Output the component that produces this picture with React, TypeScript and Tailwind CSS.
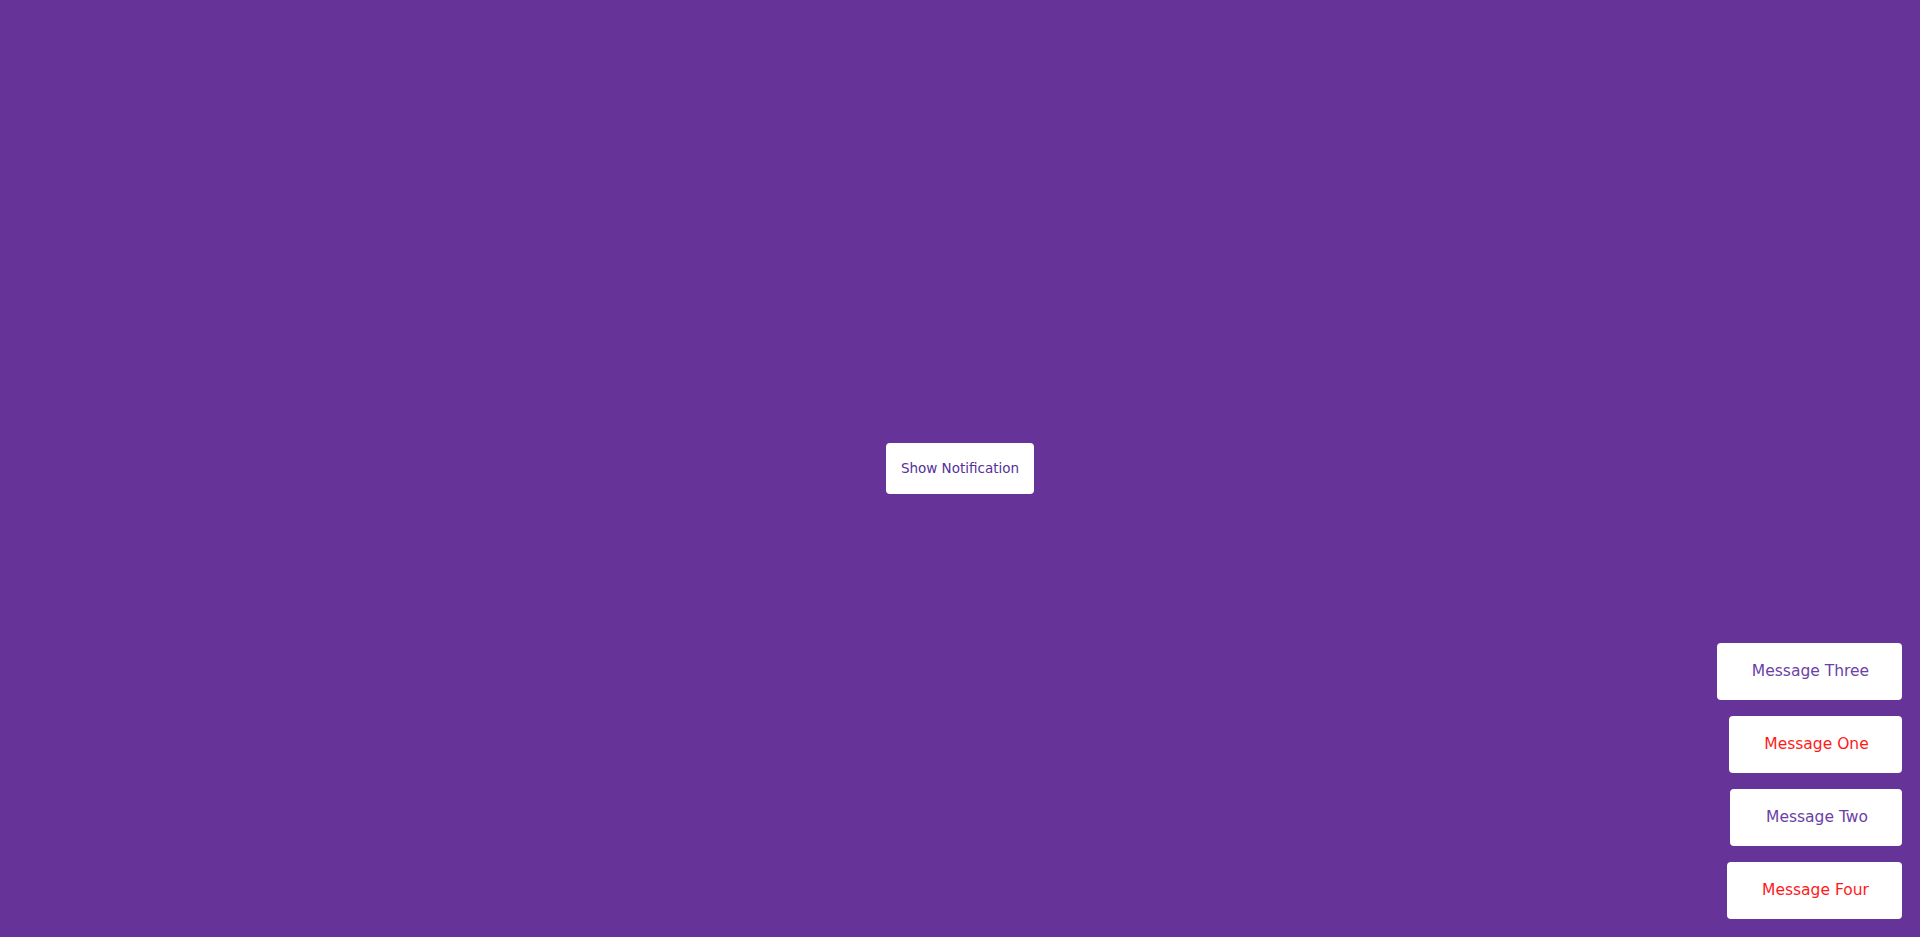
import React from 'react';

const toasts = [
  { text: 'Message Three', color: 'text-[#6b3fa8]', w: 'w-[185px]' },
  { text: 'Message One', color: 'text-[#ff1a1a]', w: 'w-[173px]' },
  { text: 'Message Two', color: 'text-[#6b3fa8]', w: 'w-[172px]' },
  { text: 'Message Four', color: 'text-[#ff1a1a]', w: 'w-[175px]' },
];

export default function App() {
  return (
    <div
      className="relative w-full h-screen bg-[#663399] flex items-center justify-center overflow-hidden"
      style={{ fontFamily: '"DejaVu Sans", "Noto Sans", sans-serif' }}
    >
      <button className="w-[148px] h-[51px] bg-white rounded-[4px] text-[13.5px] text-[#55309a]">
        Show Notification
      </button>

      {/* Toast stack */}
      <div className="absolute right-[18px] bottom-[18px] flex flex-col items-end gap-4">
        {toasts.map((t) => (
          <div
            key={t.text}
            className={`${t.w} h-[57px] bg-white rounded-[4px] flex items-center justify-center pl-[2px] text-[15.5px] ${t.color}`}
          >
            {t.text}
          </div>
        ))}
      </div>
    </div>
  );
}
